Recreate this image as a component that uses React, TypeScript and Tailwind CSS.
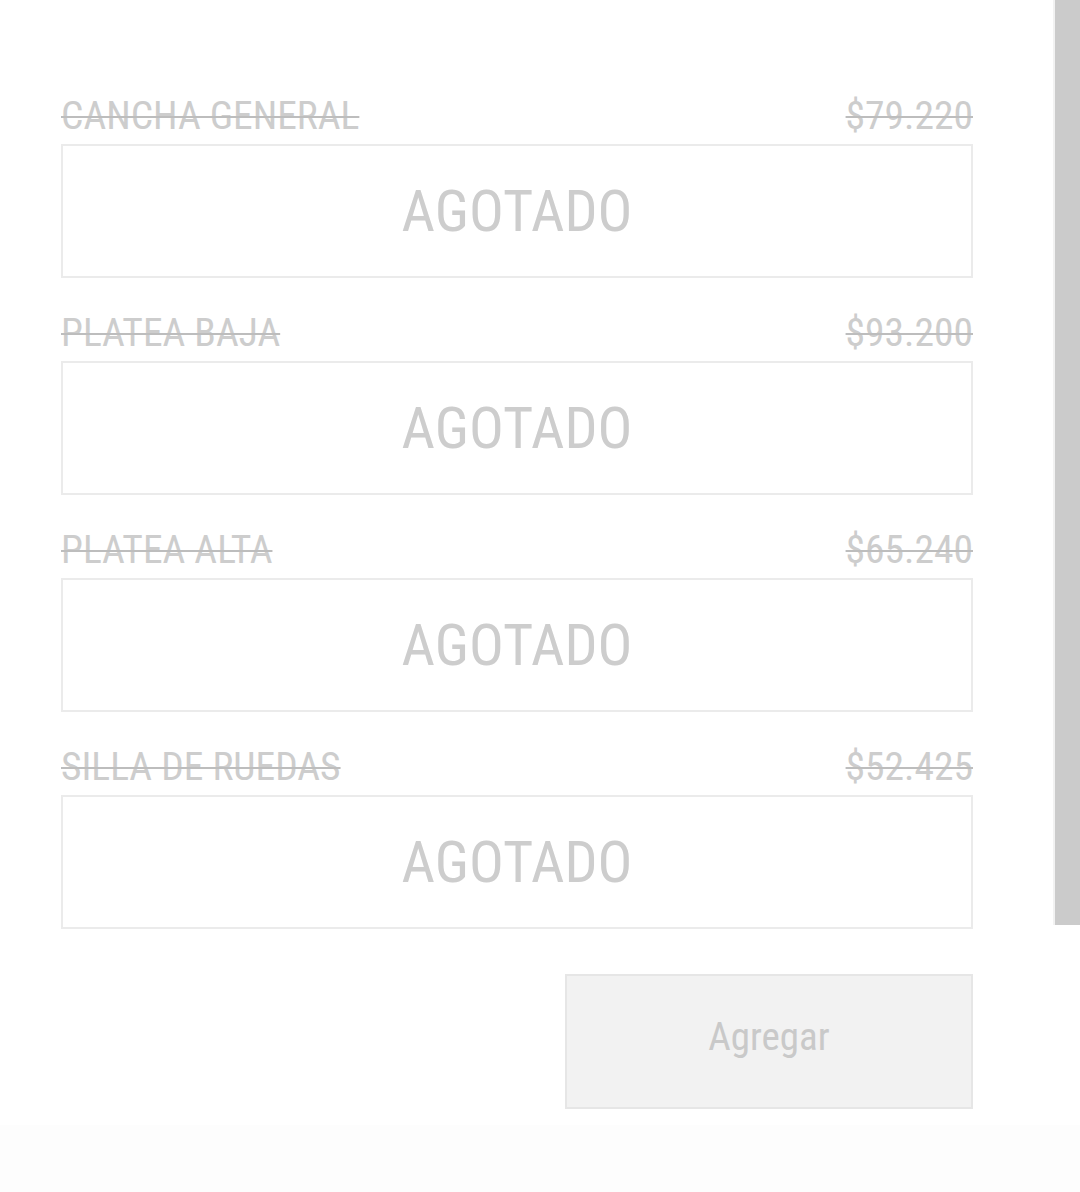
const tickets = [
  { name: 'CANCHA GENERAL', price: '$79.220' },
  { name: 'PLATEA BAJA', price: '$93.200' },
  { name: 'PLATEA ALTA', price: '$65.240' },
  { name: 'SILLA DE RUEDAS', price: '$52.425' },
];

export default function App() {
  return (
    <div
      className="flex h-[1192px] w-[1080px] flex-col bg-white text-[#cdcdcd]"
      style={{ fontFamily: "Roboto, 'Liberation Sans', sans-serif" }}
    >
      <div className="flex flex-1">
        {/* Ticket list */}
        <main className="flex-1 pl-[61px] pr-[80px] pt-[96px]">
          <div className="flex flex-col gap-[35px]">
            {tickets.map((t) => (
              <div key={t.name}>
                <div className="flex items-end justify-between text-[39.5px] leading-[39px] font-stretch-condensed">
                  <span className="line-through decoration-[#bdbdbd] decoration-2">{t.name}</span>
                  <span className="line-through decoration-[#bdbdbd] decoration-2">{t.price}</span>
                </div>
                <div className="mt-[9px] flex h-[134px] items-center justify-center border-2 border-[#ebebeb]">
                  <span className="text-[58px] font-stretch-condensed">AGOTADO</span>
                </div>
              </div>
            ))}
          </div>

          <div className="mt-[45px] flex justify-end">
            <button className="flex h-[135px] w-[408px] items-center justify-center border-2 border-[#e6e6e6] bg-[#f2f2f2] pb-[8px] text-[39px] text-[#c9c9c9] font-stretch-condensed">
              Agregar
            </button>
          </div>
        </main>

        {/* Scrollbar */}
        <aside className="h-[925px] w-[27px] border-l-2 border-[#f2f2f2] bg-[#cbcbcb]" />
      </div>
      <div className="h-[67px] bg-[#fdfdfd]" />
    </div>
  );
}
